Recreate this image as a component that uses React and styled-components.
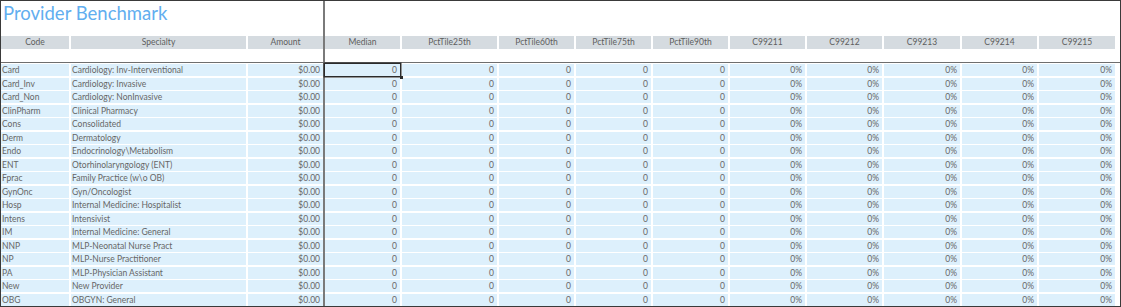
import React from "react";
import styled, { createGlobalStyle } from "styled-components";

const Global = createGlobalStyle`
  html, body { margin: 0; padding: 0; background: #ffffff; }
  body { font-family: Lato, "Open Sans", sans-serif; }
`;

const rows = [
  ["Card", "Cardiology: Inv-Interventional"],
  ["Card_Inv", "Cardiology: Invasive"],
  ["Card_Non", "Cardiology: NonInvasive"],
  ["ClinPharm", "Clinical Pharmacy"],
  ["Cons", "Consolidated"],
  ["Derm", "Dermatology"],
  ["Endo", "Endocrinology\\Metabolism"],
  ["ENT", "Otorhinolaryngology (ENT)"],
  ["Fprac", "Family Practice (w\\o OB)"],
  ["GynOnc", "Gyn/Oncologist"],
  ["Hosp", "Internal Medicine: Hospitalist"],
  ["Intens", "Intensivist"],
  ["IM", "Internal Medicine: General"],
  ["NNP", "MLP-Neonatal Nurse Pract"],
  ["NP", "MLP-Nurse Practitioner"],
  ["PA", "MLP-Physician Assistant"],
  ["New", "New Provider"],
  ["OBG", "OBGYN: General"],
];

const rightCols = [
  { name: "Median", w: 75, kind: "num" },
  { name: "PctTile25th", w: 95, kind: "num" },
  { name: "PctTile60th", w: 75, kind: "num" },
  { name: "PctTile75th", w: 75, kind: "num" },
  { name: "PctTile90th", w: 75, kind: "num" },
  { name: "C99211", w: 75, kind: "pct" },
  { name: "C99212", w: 75, kind: "pct" },
  { name: "C99213", w: 76, kind: "pct" },
  { name: "C99214", w: 75, kind: "pct" },
  { name: "C99215", w: 76, kind: "pct" },
];

const Sheet = styled.div`
  width: 1121px;
  height: 307px;
  box-sizing: border-box;
  border: 1px solid #3a3a3a;
  display: flex;
  background: #fff;
  overflow: hidden;
`;

const Pane = styled.div`
  display: flex;
  flex-direction: column;
  width: ${(p) => (p.$w ? `${p.$w}px` : "auto")};
  flex: ${(p) => (p.$w ? "0 0 auto" : "1 1 auto")};
`;

const Divider = styled.div`
  width: 2px;
  flex: 0 0 2px;
  background: #7a7a7a;
`;

const TitleBar = styled.div`
  height: 35px;
  display: flex;
  align-items: flex-start;
`;

const Title = styled.h1`
  margin: 0;
  padding: 1px 0 0 2px;
  font-family: Lato, "Open Sans", sans-serif;
  font-weight: 400;
  font-size: 18.5px;
  line-height: 22px;
  color: #62aeef;
  white-space: nowrap;
`;

const Grid = styled.div`
  display: grid;
  grid-template-columns: ${(p) => p.$cols};
  column-gap: 2px;
  row-gap: ${(p) => p.$rowGap || "0px"};
  grid-auto-rows: ${(p) => p.$rowH};
`;

const HeaderCell = styled.div`
  background: #d5dbe0;
  color: #5e5e5e;
  font-size: 8.5px;
  line-height: 13px;
  text-align: center;
  white-space: nowrap;
  overflow: hidden;
`;

const BlankRow = styled.div`
  height: 13px;
`;

const HLine = styled.div`
  height: 1px;
  background: #6e6e6e;
`;

const Cell = styled.div`
  position: relative;
  background: #ddf0fc;
  color: #666666;
  font-size: 8.5px;
  line-height: 12px;
  white-space: nowrap;
  overflow: visible;
  text-align: ${(p) => (p.$align === "right" ? "right" : "left")};
  padding: ${(p) => (p.$align === "right" ? "0 3px 0 0" : "0 0 0 1px")};
  box-sizing: border-box;
  ${(p) =>
    p.$selected &&
    `
    box-shadow: 0 0 0 1.5px #2b2b2b;
    z-index: 1;
    &::after {
      content: "";
      position: absolute;
      right: -3px;
      bottom: -3px;
      width: 3px;
      height: 3px;
      background: #2b2b2b;
    }
  `}
`;

const Body = styled(Grid)`
  padding-top: 1px;
`;

export default function App() {
  const leftCols = "68px 175px 75px";
  const rCols = rightCols.map((c) => `${c.w}px`).join(" ");
  return (
    <>
      <Global />
      <Sheet>
        <Pane $w={322}>
          <TitleBar>
            <Title>Provider Benchmark</Title>
          </TitleBar>
          <Grid $cols={leftCols} $rowH="13px">
            <HeaderCell>Code</HeaderCell>
            <HeaderCell>Specialty</HeaderCell>
            <HeaderCell>Amount</HeaderCell>
          </Grid>
          <BlankRow />
          <HLine />
          <Body $cols={leftCols} $rowH="12px" $rowGap="1.5px">
            {rows.map(([code, spec]) => (
              <React.Fragment key={code}>
                <Cell>{code}</Cell>
                <Cell>{spec}</Cell>
                <Cell $align="right">$0.00</Cell>
              </React.Fragment>
            ))}
          </Body>
        </Pane>
        <Divider />
        <Pane>
          <TitleBar />
          <Grid $cols={rCols} $rowH="13px">
            {rightCols.map((c) => (
              <HeaderCell key={c.name}>{c.name}</HeaderCell>
            ))}
          </Grid>
          <BlankRow />
          <HLine />
          <Body $cols={rCols} $rowH="12px" $rowGap="1.5px">
            {rows.map(([code], ri) => (
              <React.Fragment key={code}>
                {rightCols.map((c, ci) => (
                  <Cell
                    key={c.name}
                    $align="right"
                    $selected={ri === 0 && ci === 0}
                  >
                    {c.kind === "pct" ? "0%" : "0"}
                  </Cell>
                ))}
              </React.Fragment>
            ))}
          </Body>
        </Pane>
      </Sheet>
    </>
  );
}
